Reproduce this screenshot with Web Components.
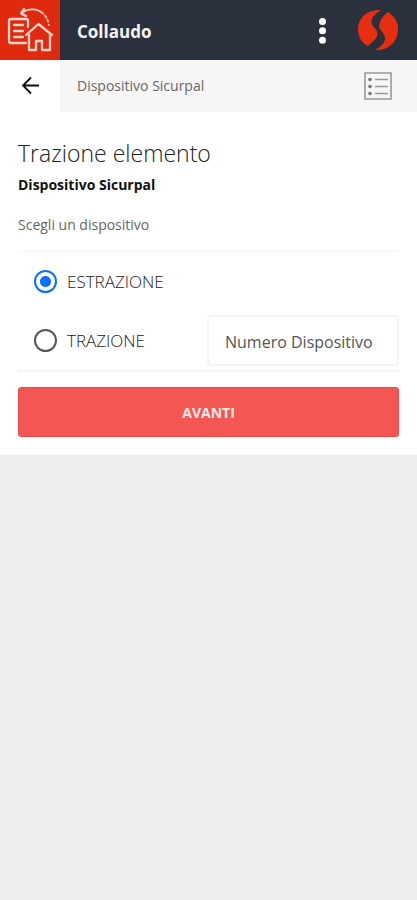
<!DOCTYPE html>
<html lang="it">
<head>
<meta charset="utf-8">
<meta name="viewport" content="width=device-width, initial-scale=1">
<title>Collaudo</title>
<style>
body { margin: 0; background: #eee; color: #444; font-family: "Open Sans", "Noto Sans", sans-serif; font-size: 14px; }
</style>
</head>
<body>
<collaudo-app></collaudo-app>
<script>
const reset = `*{box-sizing:border-box} button{font:inherit;color:inherit;border:0;padding:0;background:none;cursor:pointer} svg{display:block}`;
function define(name, css, html) {
  const template = document.createElement('template');
  template.innerHTML = `<style>${reset}${css}</style>${html}`;
  customElements.define(name, class extends HTMLElement {
    constructor() {
      super();
      this.attachShadow({ mode: 'open' }).append(template.content.cloneNode(true));
    }
  });
}

define('app-header', `
  :host { display: block; }
  header { display: flex; align-items: center; height: 60px; background: #2b303d; color: #fff; }
  .home { display: block; width: 60px; height: 60px; background: #df2a0d; }
  h1 { flex: 1; margin: 0; padding: 4px 0 0 17px; font-size: 17px; line-height: 24px; font-weight: 700; color: #f4f4f6; }
  .more { width: 36px; height: 60px; }
  .brand { margin: 0 18px 0 17px; }
`, `
  <header>
    <a class="home" href="#" aria-label="Home">
      <svg width="60" height="60" viewBox="0 0 60 60" fill="none" stroke="#ffd3cb" stroke-width="2.300" stroke-linejoin="round" stroke-linecap="round">
        <path d="M26 43H11q-2 0-2-2V21q0-2 2-2h15q2 0 2 2v6M14 25h9M14 31h9M14 37h9"/>
        <path d="M26 35 38.500 24 52 35M29 34v16h7v-9h6v9h8V34"/>
        <path d="M22 13C31 6 46 9 49 25" stroke-width="1.800" stroke-dasharray="23 2.500 2.500 2.500 2 3"/>
        <path d="M24 9 21 13.500 26 16"/>
      </svg>
    </a>
    <h1><slot></slot></h1>
    <button class="more" type="button" aria-label="Menu">
      <svg width="36" height="60" viewBox="0 0 36 60" fill="#fff"><circle cx="18.500" cy="21.500" r="3.500"/><circle cx="18.500" cy="30.800" r="3.500"/><circle cx="18.500" cy="40.200" r="3.500"/></svg>
    </button>
    <svg class="brand" width="42" height="42" viewBox="0 0 42 42" fill="#e72e10" role="img" aria-label="Sicurpal">
      <path d="M24 1C10 0 1 9 1 20C1 28 5 34 11 37C16 32 20 30 20.500 25C21 20 14 18 14.500 12C15 8 19 4 24 1Z"/>
      <path d="M31 3C37 7 42 13 41 22C40 34 30 42 18 41C24 38 28 34 28 29C28 24 22 21 22 17C23 11 26 7 31 3Z"/>
    </svg>
  </header>`);

define('sub-bar', `
  :host { display: block; }
  nav { display: flex; height: 52px; align-items: center; background: #f6f6f6; color: #666; }
  .back { width: 60px; height: 52px; background: #fff; }
  span { flex: 1; padding-left: 17px; font-size: 14px; line-height: 20px; }
  .list { margin-right: 25px; }
`, `
  <nav>
    <button class="back" type="button" aria-label="Indietro">
      <svg width="60" height="52" viewBox="0 0 60 52" fill="none" stroke="#111" stroke-width="1.800"><path d="M39 25.500H23M31 17.500l-8 8 8 8"/></svg>
    </button>
    <span><slot></slot></span>
    <button class="list" type="button" aria-label="Elenco">
      <svg width="28" height="28" viewBox="0 0 28 28" fill="none" stroke="#999" stroke-width="1.600"><path d="M1 1h26v26H1zM11 7.500h13M11 14.500h13M11 21.500h13"/><g fill="#777" stroke="none"><circle cx="6" cy="7.500" r="1.800"/><circle cx="6" cy="14.500" r="1.800"/><circle cx="6" cy="21.500" r="1.800"/></g></svg>
    </button>
  </nav>`);

define('page-title', `
  :host { display: block; }
  h2 { margin: 0; font-size: 23px; line-height: 32px; font-weight: 300; color: #222; }
  h3 { margin: 0; font-size: 14px; line-height: 32px; font-weight: 700; color: #111; }
`, `<h2><slot></slot></h2><h3><slot name="subtitle"></slot></h3>`);

define('device-choice', `
  :host { display: block; }
  fieldset { margin: 0; padding: 0; border: 0; min-width: 0; }
  legend { padding: 0; font-size: 14px; line-height: 20px; color: #666; }
  .rows { margin-top: 16px; border-top: 1px solid #f4f4f4; border-bottom: 2px solid #f6f6f6; }
  .row { display: flex; align-items: center; height: 59px; padding-left: 16px; }
  label { flex: 1; padding-left: 10px; font-size: 17px; line-height: 24px; font-weight: 300; color: #222; }
  input[type=radio] { appearance: none; display: block; margin: 0; width: 23px; height: 23px; border: 2px solid #555; border-radius: 50%; background: #fff; }
  input[type=radio]:checked { border-color: #0b70f5; background: radial-gradient(circle, #0b70f5 5px, #fff 6px); }
  .number { width: 192px; height: 51px; margin: 0; padding: 2px 16px 0; border: 2px solid #f4f4f4; border-radius: 4px; background: #fff; color: #444; font: 16px/24px "Open Sans", "Noto Sans", sans-serif; }
  .number::placeholder { color: #555; opacity: 1; }
`, `
  <fieldset>
    <legend>Scegli un dispositivo</legend>
    <div class="rows">
      <div class="row"><input type="radio" id="extract" name="mode" checked><label for="extract">ESTRAZIONE</label></div>
      <div class="row"><input type="radio" id="pull" name="mode"><label for="pull">TRAZIONE</label>
        <input class="number" type="text" placeholder="Numero Dispositivo" aria-label="Numero Dispositivo"></div>
    </div>
  </fieldset>`);

define('primary-button', `
  :host { display: block; }
  button { display: block; width: 100%; height: 50px; border: 1px solid #ef4a46; border-radius: 3px; background: #f35753; color: #ffe9e8; font-size: 14px; font-weight: 700; }
`, `<button type="button"><slot></slot></button>`);

define('collaudo-app', `
  :host { display: block; background: #fff; }
  main { display: flex; flex-direction: column; padding: 25px 18px 18px; }
  device-choice { margin-top: 14px; }
  primary-button { margin-top: 15px; }
`, `
  <app-header>Collaudo</app-header>
  <sub-bar>Dispositivo Sicurpal</sub-bar>
  <main>
    <page-title>Trazione elemento<span slot="subtitle">Dispositivo Sicurpal</span></page-title>
    <device-choice></device-choice>
    <primary-button>AVANTI</primary-button>
  </main>`);
</script>
</body>
</html>
